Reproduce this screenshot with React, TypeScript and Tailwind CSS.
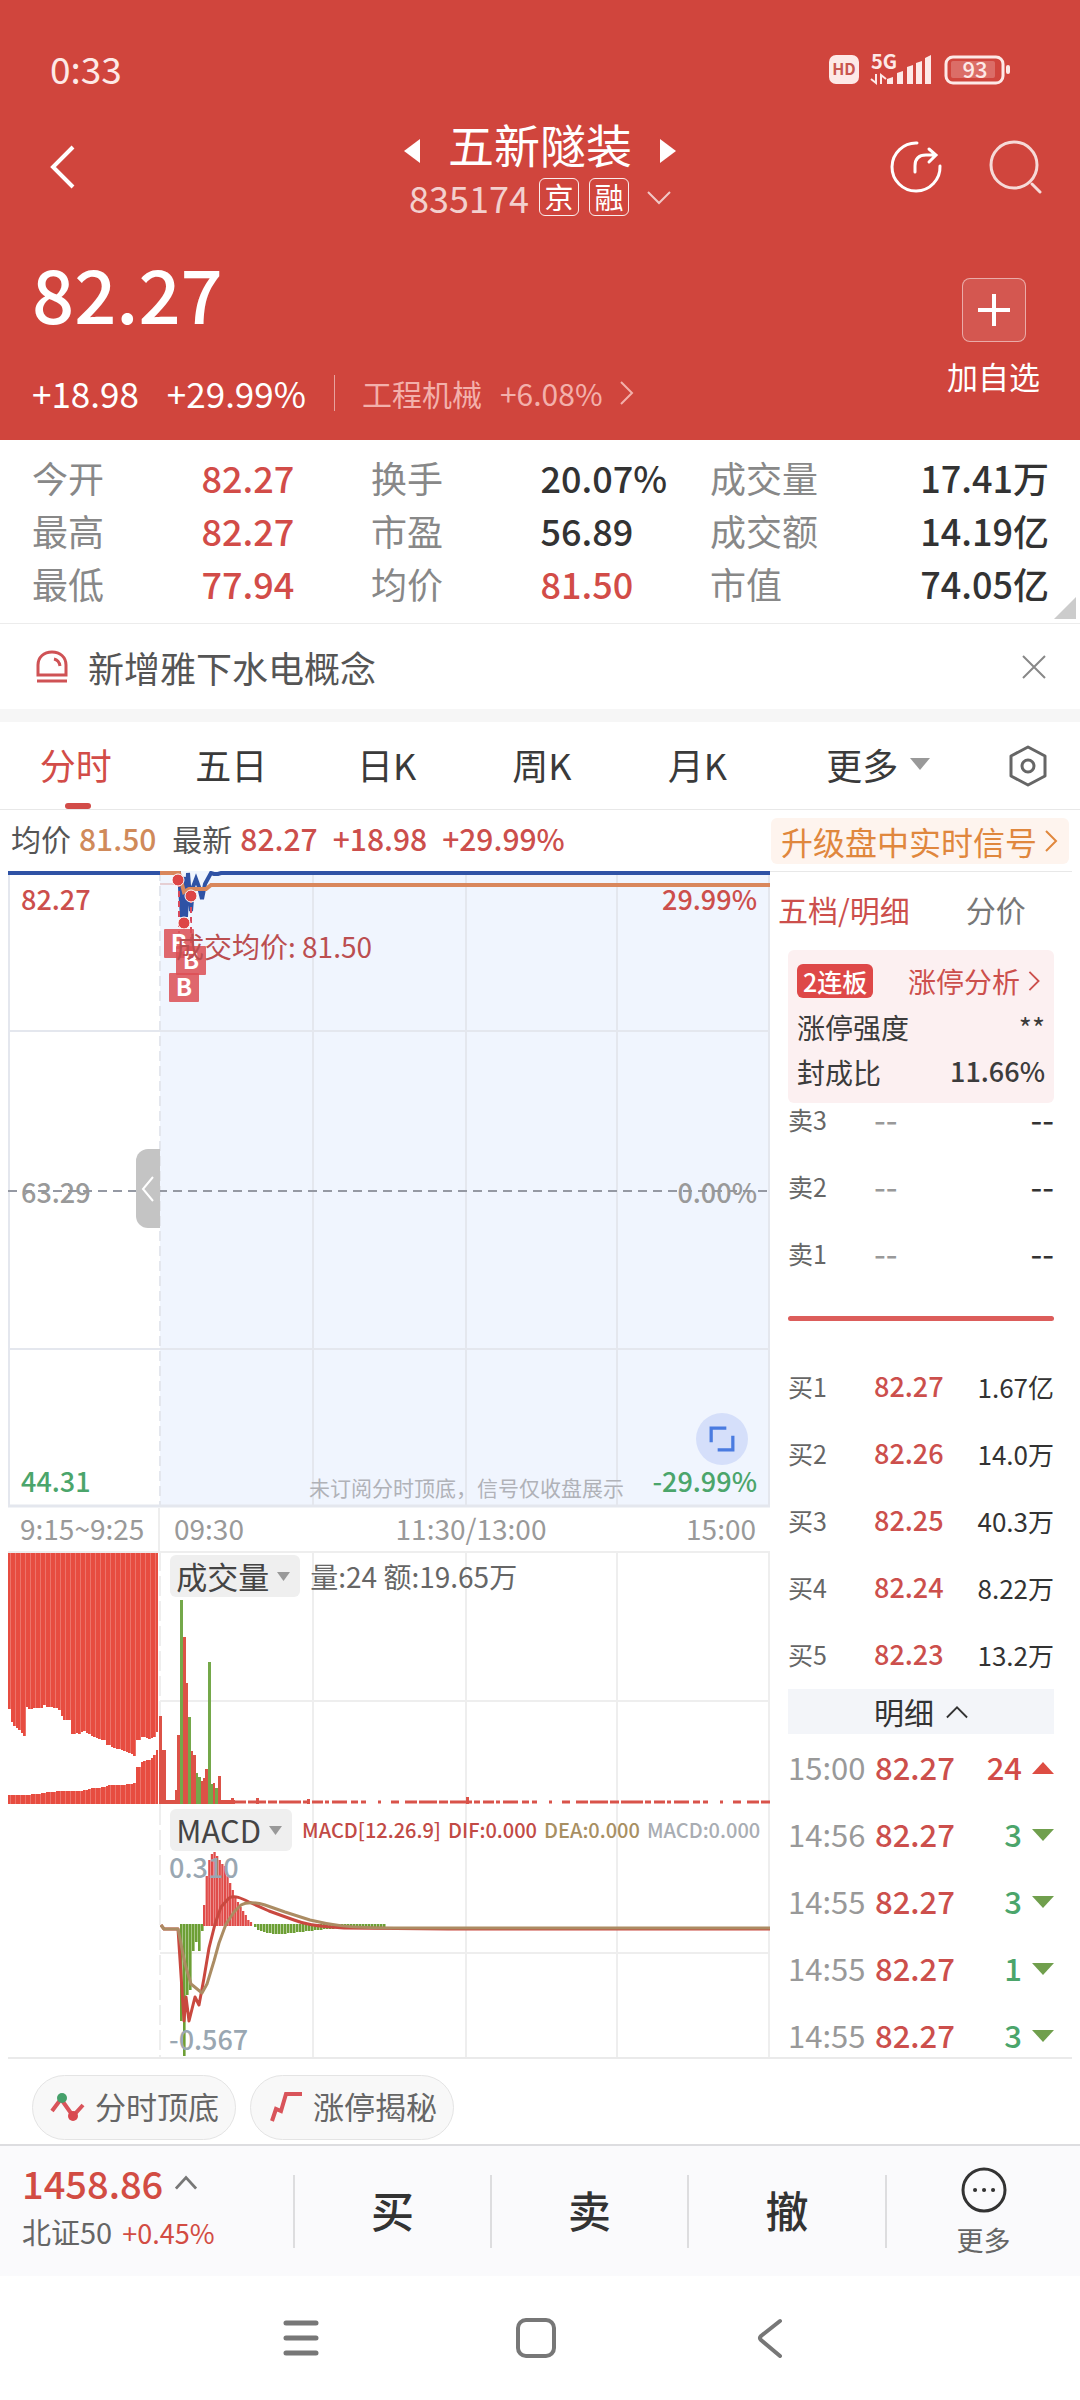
/**
 * Stock quote screen: price header, key figures, intraday charts and order book.
 */
import { useState } from 'react';
import type { ReactNode } from 'react';

type Tone = 'up' | 'down' | 'plain';

const TONE_STYLES: Record<Tone, string> = {
  up: 'text-[#d24c48]',
  down: 'text-[#4ba56b]',
  plain: 'text-[#333333]',
};

const STATS: { label: string; value: string; tone: Tone; end?: boolean }[] = [
  { label: '今开', value: '82.27', tone: 'up' },
  { label: '换手', value: '20.07%', tone: 'plain' },
  { label: '成交量', value: '17.41万', tone: 'plain', end: true },
  { label: '最高', value: '82.27', tone: 'up' },
  { label: '市盈', value: '56.89', tone: 'plain' },
  { label: '成交额', value: '14.19亿', tone: 'plain', end: true },
  { label: '最低', value: '77.94', tone: 'up' },
  { label: '均价', value: '81.50', tone: 'up' },
  { label: '市值', value: '74.05亿', tone: 'plain', end: true },
];

const PERIODS = ['分时', '五日', '日K', '周K', '月K'];

const SELLS = ['卖3', '卖2', '卖1'];

const BUYS = [
  { level: '买1', price: '82.27', volume: '1.67亿' },
  { level: '买2', price: '82.26', volume: '14.0万' },
  { level: '买3', price: '82.25', volume: '40.3万' },
  { level: '买4', price: '82.24', volume: '8.22万' },
  { level: '买5', price: '82.23', volume: '13.2万' },
];

const TRADES: { time: string; price: string; volume: string; tone: Tone }[] = [
  { time: '15:00', price: '82.27', volume: '24', tone: 'up' },
  { time: '14:56', price: '82.27', volume: '3', tone: 'down' },
  { time: '14:55', price: '82.27', volume: '3', tone: 'down' },
  { time: '14:55', price: '82.27', volume: '1', tone: 'down' },
  { time: '14:55', price: '82.27', volume: '3', tone: 'down' },
];

// Unmatched auction volume, drawn downwards from the top edge.
const AUCTION_TOP = [
  156, 169, 173, 175, 177, 180, 183, 154, 156, 156, 155, 155, 155, 155, 152, 154, 154, 154, 155,
  155, 157, 163, 167, 167, 167, 181, 181, 180, 181, 179, 178, 180, 181, 183, 184, 185, 186, 187,
  187, 192, 192, 194, 195, 196, 196, 197, 198, 199, 200, 201, 203, 187, 187, 184, 184, 185, 186,
  185, 184, 179,
];

// Matched auction volume, drawn upwards from the bottom edge.
const AUCTION_BOTTOM = [
  9, 9, 9, 9, 9, 9, 9, 9, 9, 10, 10, 10, 10, 11, 11, 12, 12, 12, 12, 13, 13, 13, 13, 13, 13, 13,
  13, 13, 13, 13, 14, 14, 15, 16, 16, 16, 16, 17, 17, 18, 19, 19, 19, 19, 19, 19, 19, 20, 20, 20,
  21, 37, 37, 42, 43, 44, 44, 46, 49, 54,
];

// x, width, height and direction of each minute's traded volume.
const VOLUME_BARS: [number, number, number, Tone][] = [
  [151, 3, 88, 'up'],
  [154, 4, 54, 'up'],
  [158, 9, 4, 'up'],
  [167, 2, 14, 'up'],
  [169, 3, 69, 'up'],
  [172, 3, 204, 'down'],
  [175, 3, 167, 'up'],
  [178, 2, 121, 'up'],
  [180, 3, 87, 'down'],
  [183, 2, 53, 'up'],
  [185, 3, 49, 'up'],
  [188, 2, 31, 'down'],
  [190, 3, 27, 'down'],
  [193, 2, 23, 'up'],
  [195, 2, 26, 'up'],
  [197, 3, 35, 'up'],
  [200, 3, 142, 'down'],
  [203, 2, 20, 'down'],
  [205, 2, 21, 'up'],
  [207, 3, 16, 'down'],
  [210, 3, 28, 'up'],
  [213, 14, 4, 'up'],
  [223, 3, 6, 'up'],
  [248, 3, 6, 'up'],
  [299, 3, 5, 'up'],
  [458, 3, 7, 'up'],
];

const MACD_DOWN = [
  [172, 216],
  [175, 251],
  [178, 190],
  [181, 185],
  [184, 146],
  [187, 137],
  [190, 146],
  [193, 126],
];

const MACD_UP = [100, 71, 55, 49, 47, 51, 55, 59, 61, 71, 78, 85, 93, 97, 102, 106, 110, 115, 117];

const MACD_TAIL = [
  3, 6, 7, 8, 9, 9, 10, 10, 10, 10, 10, 9, 9, 9, 8, 8, 8, 7, 7, 7, 6, 6, 6, 5, 5, 5, 5, 4, 4, 4, 4,
  3, 3, 3, 3, 3, 3, 3, 3, 3, 3, 3, 3, 3,
];

function Chevron({ d, className, width = 3 }: { d: string; className: string; width?: number }) {
  return (
    <svg
      viewBox="0 0 24 24"
      className={className}
      fill="none"
      stroke="currentColor"
      strokeWidth={width}
      aria-hidden="true"
    >
      <path d={d} />
    </svg>
  );
}

function Triangle({ points, className }: { points: string; className: string }) {
  return (
    <svg viewBox="0 0 24 24" preserveAspectRatio="none" className={className} fill="currentColor" aria-hidden="true">
      <polygon points={points} />
    </svg>
  );
}

function StatusBar() {
  return (
    <div className="flex h-9 items-center justify-between pr-[68px] pl-[50px] text-[#fde9e7]">
      <span className="pb-1 text-[37px] leading-9">0:33</span>
      <svg viewBox="0 0 184 36" className="h-9 w-[184px] overflow-visible" fill="currentColor" aria-hidden="true">
        <rect x="1" y="3" width="30" height="29" rx="7" />
        <text x="16" y="23" textAnchor="middle" fontSize="16" fontWeight="700" fill="#c8564f">HD</text>
        <text x="43" y="17" fontSize="20" fontWeight="700">5G</text>
        <path d="M48 22v9l-5-4M53 32v-9l5 4" fill="none" stroke="currentColor" strokeWidth="2" />
        <path d="m59 27 6-2v7h-6zM69 21l6-2v13h-6zM79 15l6-2v19h-6zM88 11l6-2v23h-6zM97 6l6-3v29h-6z" />
        <rect x="118" y="5" width="57" height="26" rx="7" fill="none" stroke="currentColor" strokeWidth="3" />
        <rect x="123" y="9" width="44" height="17" rx="2" opacity="0.25" />
        <rect x="178" y="13" width="4" height="9" rx="2" />
        <text x="147" y="26" textAnchor="middle" fontSize="22" fontWeight="500">93</text>
      </svg>
    </div>
  );
}

function QuoteHeader() {
  return (
    <header className="bg-[#d0453d] pt-[52px] pb-[27px] text-white">
      <StatusBar />
      <div className="mt-[30px] grid grid-cols-[1fr_auto_1fr] items-center">
        <button type="button" aria-label="返回" className="ml-[45px] w-fit">
          <Chevron d="M14 2 4 12l10 10" className="size-12" width={2} />
        </button>
        <div className="flex flex-col items-center">
          <div className="flex h-[50px] items-center gap-7">
            <button type="button" aria-label="上一只">
              <Triangle points="24,0 24,24 0,12" className="mt-4 h-6 w-4" />
            </button>
            <h1 className="text-[46px] leading-[48px]">五新隧装</h1>
            <button type="button" aria-label="下一只">
              <Triangle points="0,0 0,24 24,12" className="mt-4 h-6 w-4" />
            </button>
          </div>
          <button type="button" className="mt-[10px] flex h-[38px] items-center gap-[10px]">
            <span className="text-[36px] leading-[36px] text-white/75">835174</span>
            <span className="h-[38px] w-10 rounded-md border border-white/90 text-[29px] leading-[34px]">京</span>
            <span className="h-[38px] w-10 rounded-md border border-white/90 text-[29px] leading-[34px]">融</span>
            <Chevron d="m1 7 11 11L23 7" className="ml-2 size-6 text-white/70" width={2} />
          </button>
        </div>
        <div className="mr-[38px] flex items-center justify-end gap-[42px]">
          <button type="button" aria-label="分享">
            <svg
              viewBox="0 0 56 56"
              className="size-14"
              fill="none"
              stroke="currentColor"
              strokeWidth="3"
              strokeLinecap="round"
              aria-hidden="true"
            >
              <path d="M29 4a24 24 0 1 0 23 23" />
              <path d="M27 33v-6q0-11 11-11h9M41 10l7 6-7 7" />
            </svg>
          </button>
          <button type="button" aria-label="搜索">
            <svg
              viewBox="0 0 56 56"
              className="size-14 text-white/80"
              fill="none"
              stroke="currentColor"
              strokeWidth="3"
              strokeLinecap="round"
              aria-hidden="true"
            >
              <circle cx="28" cy="26" r="23" />
              <path d="m46 45 8 8" />
            </svg>
          </button>
        </div>
      </div>
      <div className="mt-9 flex justify-between pr-10 pl-8">
        <div>
          <p className="text-[74px] leading-[80px] font-medium">82.27</p>
          <div className="mt-[41px] flex h-10 items-center text-[35px]">
            <span>+18.98</span>
            <span className="ml-7">+29.99%</span>
            <span className="ml-7 h-9 w-px bg-white/50" />
            <a href="#sector" className="ml-[27px] flex items-center text-[30px] text-[#f3b0ab]">
              工程机械<span className="ml-[18px]">+6.08%</span>
              <Chevron d="m6 1 11 11L6 23" className="ml-3 size-6" width={2} />
            </a>
          </div>
        </div>
        <button type="button" className="flex flex-col items-center pt-[26px]">
          <span className="flex size-16 items-center justify-center rounded-lg border border-white/50 bg-white/10">
            <Chevron d="M12 0v24M0 12h24" className="size-8" width={3} />
          </span>
          <span className="mt-[14px] text-[31px] leading-10">加自选</span>
        </button>
      </div>
    </header>
  );
}

function KeyStats() {
  return (
    <section className="relative border-b border-[#ececec] pt-[11px] pr-[31px] pb-[13px] pl-8">
      <dl className="grid grid-cols-3">
        {STATS.map((stat) => (
          <div key={stat.label} className="flex text-[36px] leading-[53px]">
            <dt className="w-1/2 text-[#888888]">{stat.label}</dt>
            <dd className={`font-medium ${TONE_STYLES[stat.tone]} ${stat.end ? 'ml-auto' : ''}`}>{stat.value}</dd>
          </div>
        ))}
      </dl>
      <Triangle points="24,0 24,24 0,24" className="absolute right-1 bottom-1 size-[22px] text-[#cccccc]" />
    </section>
  );
}

function Notice() {
  return (
    <section className="flex h-[98px] items-center border-b-[13px] border-[#f6f6f6] px-[34px]">
      <svg viewBox="0 0 36 36" className="size-9" fill="none" stroke="#cf5255" strokeWidth="3" aria-hidden="true">
        <path d="M4 26V16C4 8 10 3 18 3s14 5 14 13v10zM3 32h30M20 10q5 1 6 7" />
      </svg>
      <p className="ml-[18px] text-[36px] leading-[40px] text-[#555555]">新增雅下水电概念</p>
      <button type="button" aria-label="关闭" className="ml-auto text-[#888888]">
        <Chevron d="m1 1 22 22M23 1 1 23" className="size-6" width={2} />
      </button>
    </section>
  );
}

function PeriodTabs() {
  const [active, setActive] = useState(PERIODS[0]);

  return (
    <nav className="grid h-[88px] grid-cols-[repeat(5,156fr)_203fr_97fr] border-b border-[#e8e8e8] pr-1 text-[36px] text-[#3a3a3a]">
      {PERIODS.map((period) => (
        <button
          key={period}
          type="button"
          onClick={() => setActive(period)}
          className={`relative pr-1 pb-1 ${period === active ? 'text-[#d24c48]' : ''}`}
        >
          {period}
          {period === active && (
            <span className="absolute bottom-0 left-1/2 h-[6px] w-[26px] -translate-x-1/2 rounded-full bg-[#d24c48]" />
          )}
        </button>
      ))}
      <button type="button" className="flex items-center justify-center gap-3 pb-1">
        更多
        <Triangle points="0,0 24,0 12,24" className="h-3 w-5 text-[#999999]" />
      </button>
      <button type="button" aria-label="设置" className="flex items-center justify-center">
        <svg
          viewBox="0 0 40 42"
          className="h-[42px] w-10"
          fill="none"
          stroke="#666666"
          strokeWidth="3"
          strokeLinejoin="round"
          aria-hidden="true"
        >
          <path d="M20 2 37 11v20l-17 9-17-9V11z" />
          <circle cx="20" cy="21" r="6" />
        </svg>
      </button>
    </nav>
  );
}

function SummaryLine() {
  return (
    <div className="flex h-[61px] items-center justify-between pr-[11px] pl-[11px] text-[30px]">
      <p className="flex pb-1 text-[#555555]">
        均价<span className="ml-2 font-medium text-[#d08a5a]">81.50</span>
        <span className="ml-4">最新</span>
        <span className="ml-2 font-medium text-[#cc4f4c]">82.27</span>
        <span className="ml-[15px] font-medium text-[#cc4f4c]">+18.98</span>
        <span className="ml-[15px] font-medium text-[#cc4f4c]">+29.99%</span>
      </p>
      <a
        href="#signal"
        className="flex h-[46px] items-center rounded-md bg-[#fef4ee] pr-[6px] pl-[10px] text-[32px] text-[#e0873d]"
      >
        升级盘中实时信号
        <Chevron d="m7 2 10 10L7 22" className="ml-[2px] size-6" width={2} />
      </a>
    </div>
  );
}

function BuyMark({ x, y }: { x: number; y: number }) {
  return (
    <g>
      <rect x={x} y={y} width="30" height="29" rx="1" fill="#dc4f55" opacity="0.86" />
      <text x={x + 15} y={y + 23} textAnchor="middle" fontSize="24" fontWeight="700" fill="#ffffff">B</text>
    </g>
  );
}

function PriceChart() {
  return (
    <div className="relative">
      <svg viewBox="0 0 762 637" className="block w-full" fontSize="27" role="img" aria-label="分时走势">
        <rect x="152" y="0" width="610" height="636" fill="#f0f5fe" />
        <g stroke="#e4e7ee" strokeWidth="2">
          <path d="M1 0v636M305 0v636M458 0v636M609 0v636M761 0v636" />
          <path d="M0 160h762M0 478h762" />
          <path d="M0 635h762" strokeWidth="3" />
          <path d="M152 0v636" strokeDasharray="10 5" />
        </g>
        <path d="M0 320h762" stroke="#9599a3" strokeWidth="2" strokeDasharray="9 6" />
        <path d="M152 13h19" stroke="#dba9a9" strokeWidth="1" />
        <path
          d="M0 2h171l3 44 3-40 1 40 2-44 3 38 2-24 3-8 3 8 3 12 3-15 6-11 3 1h4l3-1h549"
          fill="none"
          stroke="#2f52a5"
          strokeWidth="4"
        />
        <path d="M152 2h19l5 19 5-3h17l5-4h559" fill="none" stroke="#d9875c" strokeWidth="4" />
        <path d="M171 10v52M183 26v54" stroke="#d6495c" strokeWidth="2" strokeDasharray="6 4" />
        <g fill="#dd4646" stroke="#ffffff" strokeWidth="1">
          <circle cx="170" cy="9" r="6" />
          <circle cx="176" cy="52" r="6" />
          <circle cx="183" cy="25" r="6" />
        </g>
        <BuyMark x={156} y={58} />
        <BuyMark x={168} y={75} />
        <BuyMark x={161} y={102} />
        <text x="168" y="87" fontSize="28" fill="#bb4e50">成交均价: 81.50</text>
        <g fontWeight="500">
          <text x="13" y="39" fill="#cc4f4c">82.27</text>
          <text x="749" y="39" textAnchor="end" fill="#cc4f4c">29.99%</text>
          <text x="13" y="332" fill="#999999">63.29</text>
          <text x="749" y="332" textAnchor="end" fill="#999999">0.00%</text>
          <text x="13" y="621" fill="#4ba56b">44.31</text>
          <text x="749" y="621" textAnchor="end" fill="#4ba56b">-29.99%</text>
        </g>
        <text x="301" y="625" fontSize="21" fill="#b0b2b8">未订阅分时顶底，信号仅收盘展示</text>
      </svg>
      <button
        type="button"
        aria-label="收起竞价"
        className="absolute top-[278px] left-[16.8%] flex h-[79px] w-6 items-center justify-center rounded-l-xl bg-[#c4c4c4] text-white"
      >
        <Chevron d="M17 0 7 12l10 12" className="h-[26px] w-6" width={2} />
      </button>
      <button
        type="button"
        aria-label="全屏"
        className="absolute right-[22px] bottom-[43px] flex size-[52px] items-center justify-center rounded-full bg-[#d5dffa] text-[#4a7be0]"
      >
        <Chevron d="M2 15V2h14M22 9v13H8" className="size-[26px]" width={3} />
      </button>
    </div>
  );
}

function IndicatorHeader({ name, children }: { name: string; children: ReactNode }) {
  return (
    <div className="absolute inset-x-0 top-1 flex items-center pl-[21.3%]">
      <button
        type="button"
        className="flex h-[42px] items-center gap-2 rounded-md bg-[#efefef] px-[6px] text-[31px] text-[#444444]"
      >
        {name}
        <Triangle points="0,0 24,0 12,24" className="mr-1 h-[9px] w-[13px] text-[#999999]" />
      </button>
      {children}
    </div>
  );
}

function VolumeChart() {
  return (
    <div className="relative">
      <svg viewBox="0 0 762 254" className="block w-full" role="img" aria-label="成交量">
        <g stroke="#eeeeee" strokeWidth="2">
          <path d="M0 1h762M152 150h610M305 0v254M458 0v254M609 0v254M761 0v254" />
          <path d="M152 0v254" strokeDasharray="20 5" />
        </g>
        <g fill="#e74c40" shapeRendering="crispEdges">
          {AUCTION_TOP.map((height, i) => (
            <rect key={i} x={i * 2.5} y="2" width="2.5" height={height} />
          ))}
          {AUCTION_BOTTOM.map((height, i) => (
            <rect key={i} x={i * 2.5} y={253 - height} width="2.5" height={height} />
          ))}
        </g>
        <path
          d="M2 128h148"
          stroke="#ffffff"
          strokeWidth="252"
          strokeDasharray="1 4"
          opacity="0.22"
          shapeRendering="crispEdges"
        />
        {VOLUME_BARS.map(([x, width, height, tone]) => (
          <rect
            key={x}
            x={x}
            y={253 - height}
            width={width}
            height={height}
            fill={tone === 'down' ? '#74a84a' : '#dc5247'}
          />
        ))}
        <path
          d="M226 251h536"
          stroke="#d9534a"
          strokeWidth="3"
          strokeDasharray="12 2 18 2 9 2 22 2 6 3 11 2 4 3 15 4 7 3 5 12 3 10 8 6"
        />
      </svg>
      <IndicatorHeader name="成交量">
        <span className="ml-[10px] text-[28px] text-[#666666]">量:24 额:19.65万</span>
      </IndicatorHeader>
    </div>
  );
}

function MacdChart() {
  return (
    <div className="relative">
      <svg viewBox="0 0 762 252" className="block w-full" fontSize="27" role="img" aria-label="MACD">
        <g stroke="#eeeeee" strokeWidth="2">
          <path d="M152 148h610M305 0v252M458 0v252M609 0v252M761 0v252" />
          <path d="M152 0v252" strokeDasharray="20 5" />
        </g>
        <g fill="#6d9f35">
          {MACD_DOWN.map(([x, bottom]) => (
            <rect key={x} x={x} y="119" width="2.6" height={bottom - 119} />
          ))}
          {MACD_TAIL.map((height, i) => (
            <rect key={i} x={246 + i * 3} y="119" width="2.5" height={height} />
          ))}
        </g>
        <g fill="#e04c4a">
          {MACD_UP.map((top, i) => (
            <rect key={i} x={195 + i * 2.6} y={top} width="2.3" height={121 - top} />
          ))}
        </g>
        <text x="161" y="73" fill="#9aa7b2" fontWeight="500">0.310</text>
        <text x="161" y="245" fill="#9aa7b2" fontWeight="500">-0.567</text>
        <g fill="none" strokeWidth="3" strokeLinejoin="round">
          <path
            d="M153 120l3 4h14l6 92 2-24 3 24 6-24 4 8 5-27 5-30 6-24 6-17 8-9c6-3 12 0 20 4l20 9 25 9c10 4 20 6 50 8l104 1h322"
            stroke="#c9483f"
          />
          <path
            d="M153 120l3 4h14l7 35 6 20 11 9 5-9 7-23 5-18 7-19 8-12 7-7c5-3 15-3 24 0l20 7 25 8c20 5 40 8 80 8h380"
            stroke="#ab8c63"
          />
        </g>
      </svg>
      <IndicatorHeader name="MACD">
        <p className="ml-[10px] flex gap-[7px] text-[20px] font-medium whitespace-nowrap">
          <span className="text-[#c24a45]">MACD[12.26.9]</span>
          <span className="text-[#c24a45]">DIF:0.000</span>
          <span className="text-[#a88f62]">DEA:0.000</span>
          <span className="text-[#a9adb3]">MACD:0.000</span>
        </p>
      </IndicatorHeader>
    </div>
  );
}

function Charts() {
  return (
    <section className="min-w-0">
      <PriceChart />
      <div className="grid h-[43px] grid-cols-[152fr_610fr] text-[28px] leading-[41px] text-[#999999]">
        <span className="border-r-2 border-[#eeeeee] pl-3">9:15~9:25</span>
        <div className="grid grid-cols-3 pr-[14px] pl-[14px]">
          <span>09:30</span>
          <span className="pl-3 text-center">11:30/13:00</span>
          <span className="text-right">15:00</span>
        </div>
      </div>
      <VolumeChart />
      <MacdChart />
    </section>
  );
}

function LimitUpCard() {
  return (
    <div className="rounded-md bg-[#fcf0f1] px-[9px] pt-2 pb-[9px] text-[28px] text-[#3c3c3c]">
      <div className="flex h-[46px] items-center justify-between">
        <span className="rounded-md bg-[#de4848] px-[6px] text-[25px] leading-[34px] font-medium text-white">
          2连板
        </span>
        <a href="#limit-up" className="flex items-center text-[#cc4f4c]">
          涨停分析
          <Chevron d="m7 2 10 10L7 22" className="ml-[3px] size-[22px]" width={2} />
        </a>
      </div>
      <div className="flex h-[45px] items-center justify-between">
        <span>涨停强度</span>
        <span>**</span>
      </div>
      <div className="flex h-[45px] items-center justify-between">
        <span>封成比</span>
        <span className="text-[27px] font-medium">11.66%</span>
      </div>
    </div>
  );
}

function OrderBook() {
  return (
    <section className="min-w-0 border-t border-[#e8e8e8] pr-[18px]">
      <div className="flex h-[78px] items-center pb-1 pl-2 text-[30px]">
        <button type="button" className="text-[#cc4f4c]">五档/明细</button>
        <button type="button" className="ml-14 text-[#777777]">分价</button>
      </div>
      <div className="pl-[18px]">
        <LimitUpCard />
        <table className="w-full table-fixed text-[25px] leading-8">
          <tbody>
            {SELLS.map((level) => (
              <tr key={level} className="h-[67px] align-top">
                <td className="w-[86px] text-[#666666]">{level}</td>
                <td className="text-[34px] text-[#999999]">--</td>
                <td className="text-right text-[34px] text-[#333333]">--</td>
              </tr>
            ))}
          </tbody>
        </table>
        <div className="mt-3 h-[5px] rounded-full bg-[#dc5d5b]" />
        <table className="mt-8 w-full table-fixed text-[25px]">
          <tbody>
            {BUYS.map((row) => (
              <tr key={row.level} className="h-[67px]">
                <td className="w-[86px] text-[#666666]">{row.level}</td>
                <td className="text-[27px] font-medium text-[#cc4f4c]">{row.price}</td>
                <td className="text-right text-[26px] text-[#333333]">{row.volume}</td>
              </tr>
            ))}
          </tbody>
        </table>
        <button
          type="button"
          className="mt-px flex h-[45px] w-full items-center justify-center gap-3 bg-[#f3f5f9] text-[30px] text-[#333333]"
        >
          明细
          <Chevron d="m1 18 11-11 11 11" className="size-[22px]" width={2} />
        </button>
        <div className="h-[322px] overflow-hidden">
          <table className="w-full table-fixed text-[31px]">
            <tbody>
              {TRADES.map((trade, i) => (
                <tr key={i} className="h-[67px]">
                  <td className="w-[87px] text-[#999999]">{trade.time}</td>
                  <td className="font-medium text-[#cc4f4c]">{trade.price}</td>
                  <td className={`font-medium ${TONE_STYLES[trade.tone]}`}>
                    <div className="flex items-center justify-end gap-[10px]">
                      {trade.volume}
                      {trade.tone === 'up' ? (
                        <Triangle points="0,24 24,24 12,0" className="h-3 w-[22px] text-[#dd4d43]" />
                      ) : (
                        <Triangle points="0,0 24,0 12,24" className="h-3 w-[22px] text-[#709f4d]" />
                      )}
                    </div>
                  </td>
                </tr>
              ))}
            </tbody>
          </table>
        </div>
      </div>
    </section>
  );
}

function ToolChips() {
  const chip =
    'flex h-[65px] items-center gap-[9px] rounded-full border border-[#e4e4e4] bg-[#f8f8f8] pr-4 pb-[2px] pl-[17px] text-[31px] text-[#666666]';

  return (
    <div className="flex gap-[14px] px-8 pt-4 pb-1">
      <button type="button" className={chip}>
        <svg viewBox="0 0 36 36" className="size-9" fill="none" stroke="#d9545a" strokeWidth="4" aria-hidden="true">
          <path d="m2 22 9-12 12 17 10-11" />
          <circle cx="12" cy="9" r="5" fill="#45a06a" stroke="none" />
          <circle cx="23" cy="27" r="5" fill="#d9484f" stroke="none" />
        </svg>
        分时顶底
      </button>
      <button type="button" className={chip}>
        <svg viewBox="0 0 36 36" className="size-9" fill="none" stroke="#d9545a" strokeWidth="4" aria-hidden="true">
          <path d="m4 32 4-12 5 2 5-17h16" />
        </svg>
        涨停揭秘
      </button>
    </div>
  );
}

function TradeBar() {
  return (
    <footer className="grid h-[132px] grid-cols-[293fr_197fr_197fr_198fr_195fr] items-center border-t-2 border-[#dddde0] bg-[#fafafc]">
      <button type="button" className="flex h-[104px] flex-col justify-center pb-2 pl-[22px] text-left">
        <span className="flex items-center text-[38px] leading-[50px] font-medium text-[#d24c43]">
          1458.86
          <Chevron d="m1 18 11-12 11 12" className="ml-3 size-[22px] text-[#777777]" width={3} />
        </span>
        <span className="text-[29px] leading-[46px] text-[#666666]">
          北证50<span className="ml-[10px] text-[27px] text-[#d24c43]">+0.45%</span>
        </span>
      </button>
      {['买', '卖', '撤'].map((action) => (
        <button
          key={action}
          type="button"
          className="h-[73px] border-l-2 border-[#dddddf] pb-1 text-[43px] leading-[69px] font-medium text-[#333333]"
        >
          {action}
        </button>
      ))}
      <div className="flex h-[73px] items-center justify-center border-l-2 border-[#dddddf]">
        <button type="button" className="flex flex-col items-center text-[27px] leading-9 text-[#666666]">
          <svg viewBox="0 0 48 48" className="size-12" fill="none" stroke="#333333" strokeWidth="3" aria-hidden="true">
            <circle cx="24" cy="25" r="21" />
            <path d="M15 25h.1M24 25h.1M33 25h.1" strokeWidth="4" strokeLinecap="round" />
          </svg>
          <span className="mt-[9px]">更多</span>
        </button>
      </div>
    </footer>
  );
}

function SystemNav() {
  return (
    <nav className="grid h-[124px] grid-cols-[419fr_233fr_428fr] items-center text-[#777777]">
      <button type="button" aria-label="最近任务" className="mr-[98px] justify-self-end">
        <svg
          viewBox="0 0 40 40"
          className="size-10"
          stroke="currentColor"
          strokeWidth="5"
          strokeLinecap="round"
          aria-hidden="true"
        >
          <path d="M5 5h30M5 20h30M5 35h30" />
        </svg>
      </button>
      <button type="button" aria-label="主页" className="justify-self-center">
        <svg viewBox="0 0 40 40" className="size-10" fill="none" stroke="currentColor" strokeWidth="4" aria-hidden="true">
          <rect x="2" y="2" width="36" height="36" rx="8" />
        </svg>
      </button>
      <button type="button" aria-label="返回上一页" className="ml-[98px] justify-self-start">
        <svg
          viewBox="0 0 40 40"
          className="size-10"
          fill="none"
          stroke="currentColor"
          strokeWidth="4"
          strokeLinecap="round"
          strokeLinejoin="round"
          aria-hidden="true"
        >
          <path d="M30 3 11 18q-2 2 0 4l19 16" />
        </svg>
      </button>
    </nav>
  );
}

export default function App() {
  return (
    <main className="min-h-screen bg-white font-['Noto_Sans_CJK_SC',sans-serif]">
      <QuoteHeader />
      <KeyStats />
      <Notice />
      <PeriodTabs />
      <SummaryLine />
      <div className="mx-2 grid grid-cols-[762fr_302fr] border-b-2 border-[#eaeaea]">
        <Charts />
        <OrderBook />
      </div>
      <ToolChips />
      <TradeBar />
      <SystemNav />
    </main>
  );
}
